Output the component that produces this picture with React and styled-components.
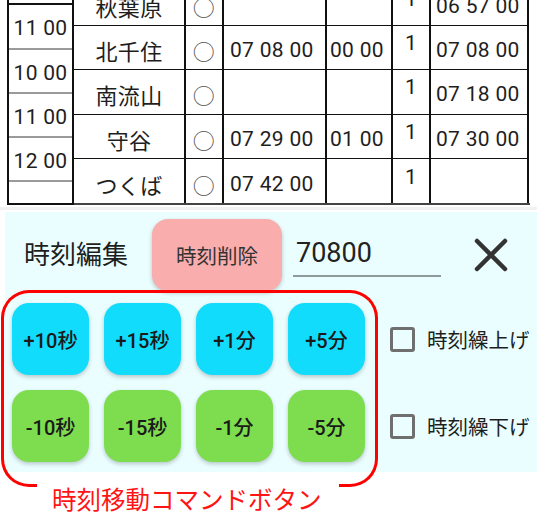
import React from 'react';
import styled, { createGlobalStyle } from 'styled-components';

const GlobalStyle = createGlobalStyle`
  html, body {
    margin: 0;
    padding: 0;
    background: #fff;
  }
  body {
    font-family: Roboto, "Noto Sans CJK JP", sans-serif;
    color: #1e1e1e;
  }
`;

const ROW_H = 44.3;

const Page = styled.div`
  position: relative;
  width: 537px;
  height: 525px;
  display: flex;
  flex-direction: column;
  overflow: hidden;
`;

const TableWrap = styled.div`
  display: flex;
  margin-top: -18.3px;
  margin-left: 7px;
  width: 523px;
`;

const TimeColumn = styled.div`
  width: 67px;
  display: flex;
  flex-direction: column;
  border-left: 2px solid #111;
  border-right: 2px solid #111;
  border-bottom: 2px solid #111;
  box-sizing: border-box;
`;

const TimeCell = styled.div`
  height: ${p => p.h}px;
  box-sizing: border-box;
  border-top: 2px solid ${p => (p.dark ? '#111' : '#9a9a9a')};
  display: flex;
  align-items: center;
  justify-content: center;
  padding-top: 4px;
  font-size: 21px;
  letter-spacing: 0.3px;
  &:first-child {
    border-top: none;
  }
`;

const MainTable = styled.div`
  flex: 1;
  display: grid;
  grid-template-columns: 112px 38px 103px 66px 38px 98px;
  grid-auto-rows: ${ROW_H}px;
  border-bottom: 2px solid #444;
`;

const Cell = styled.div`
  box-sizing: border-box;
  border-right: 2px solid #111;
  border-bottom: ${p => (p.last ? 'none' : '1px solid #111')};
  display: flex;
  align-items: center;
  justify-content: ${p => (p.center ? 'center' : 'flex-start')};
  padding: ${p => (p.raise ? '0 0 9px 0' : `5px 0 0 ${p.pad || 0}px`)};
  font-size: ${p => p.size || 21}px;
  letter-spacing: 0.3px;
  white-space: nowrap;
  color: ${p => p.color || '#1e1e1e'};
`;

const Divider = styled.div`
  height: 3px;
  margin-top: 2px;
  background: #f1f1f1;
`;

const Panel = styled.div`
  margin-top: 2px;
  margin-left: 5px;
  height: 260px;
  background: #eafeff;
  box-sizing: border-box;
  padding-top: 7px;
  display: flex;
  flex-direction: column;
`;

const Header = styled.div`
  height: 72px;
  display: flex;
  align-items: center;
`;

const Title = styled.div`
  margin-left: 19px;
  font-size: 26px;
  padding-bottom: 5px;
  color: #1e1e1e;
`;

const DeleteButton = styled.button`
  margin-left: 24px;
  width: 130px;
  height: 72px;
  border: none;
  border-radius: 16px;
  background: #f9adad;
  box-shadow: 0 2px 4px rgba(0, 0, 0, 0.22);
  font-family: Roboto, "Noto Sans CJK JP", sans-serif;
  font-size: 20.5px;
  color: #333;
  padding: 0;
`;

const TimeInput = styled.input`
  margin-left: 11px;
  width: 148px;
  height: 44px;
  box-sizing: border-box;
  border: none;
  border-bottom: 2px solid #8f9a9a;
  background: transparent;
  font-family: Roboto, "Noto Sans CJK JP", sans-serif;
  font-size: 27px;
  color: #222;
  padding: 0 0 2px 3px;
  outline: none;
`;

const CloseButton = styled.button`
  margin-left: 33px;
  width: 34px;
  height: 34px;
  border: none;
  background: transparent;
  padding: 0;
  display: flex;
`;

const Body = styled.div`
  display: flex;
  margin-top: 12px;
  margin-left: 7px;
`;

const ButtonGrid = styled.div`
  display: grid;
  grid-template-columns: repeat(4, 77px);
  grid-auto-rows: 72px;
  gap: 15px;
`;

const ShiftButton = styled.button`
  border: none;
  border-radius: 17px;
  background: ${p => (p.plus ? '#11dcfc' : '#7edc4f')};
  box-shadow: 0 2px 4px rgba(0, 0, 0, 0.22);
  font-family: Roboto, "Noto Sans CJK JP", sans-serif;
  font-size: 20px;
  font-weight: 500;
  color: #1a1a1a;
  padding: 0;
`;

const CheckColumn = styled.div`
  margin-left: 25px;
  display: grid;
  grid-auto-rows: 72px;
  gap: 15px;
`;

const CheckRow = styled.label`
  display: flex;
  align-items: center;
  gap: 12px;
  font-size: 20.5px;
  color: #1e1e1e;
`;

const CheckBox = styled.span`
  width: 25px;
  height: 25px;
  box-sizing: border-box;
  border: 3px solid #6f6f6f;
  border-radius: 3px;
`;

const Annotation = styled.div`
  position: absolute;
  left: 1px;
  top: 290px;
  width: 377px;
  display: flex;
  flex-direction: column;
  pointer-events: none;
`;

const FrameTop = styled.div`
  height: 164px;
  border: 3px solid #ff0000;
  border-bottom: none;
  border-radius: 28px 28px 0 0;
`;

const FrameBottom = styled.div`
  display: flex;
  justify-content: space-between;
`;

const Corner = styled.div`
  width: ${p => p.w}px;
  height: 27px;
  border-bottom: 3px solid #ff0000;
  ${p => (p.right
    ? 'border-right: 3px solid #ff0000; border-bottom-right-radius: 28px;'
    : 'border-left: 3px solid #ff0000; border-bottom-left-radius: 28px;')}
`;

const Caption = styled.div`
  margin-top: -2px;
  margin-left: 51px;
  font-size: 24.5px;
  line-height: 28px;
  color: #ff1414;
  font-family: "Noto Sans CJK JP", sans-serif;
`;

const rows = [
  ['秋葉原', '', '', '06 57 00'],
  ['北千住', '07 08 00', '00 00', '07 08 00'],
  ['南流山', '', '', '07 18 00'],
  ['守谷', '07 29 00', '01 00', '07 30 00'],
  ['つくば', '07 42 00', '', ''],
];

const leftTimes = [
  { t: '', h: 21.6 },
  { t: '11 00', h: ROW_H, dark: true },
  { t: '10 00', h: ROW_H },
  { t: '11 00', h: ROW_H },
  { t: '12 00', h: ROW_H },
  { t: '', h: 22 },
];

const plus = ['+10秒', '+15秒', '+1分', '+5分'];
const minus = ['-10秒', '-15秒', '-1分', '-5分'];

const App = () => (
  <Page>
    <GlobalStyle />
    <TableWrap>
      <TimeColumn>
        {leftTimes.map((c, i) => (
          <TimeCell key={i} h={c.h} dark={c.dark}>{c.t}</TimeCell>
        ))}
      </TimeColumn>
      <MainTable>
        {rows.map((r, i) => {
          const last = i === rows.length - 1;
          return (
            <React.Fragment key={i}>
              <Cell center last={last} size={22}>{r[0]}</Cell>
              <Cell center last={last} size={22} color="#555">○</Cell>
              <Cell last={last} pad={6}>{r[1]}</Cell>
              <Cell last={last} pad={3}>{r[2]}</Cell>
              <Cell center last={last} raise>1</Cell>
              <Cell last={last} pad={5}>{r[3]}</Cell>
            </React.Fragment>
          );
        })}
      </MainTable>
    </TableWrap>
    <Divider />
    <Panel>
      <Header>
        <Title>時刻編集</Title>
        <DeleteButton>時刻削除</DeleteButton>
        <TimeInput defaultValue="70800" />
        <CloseButton aria-label="close">
          <svg width="34" height="34" viewBox="0 0 34 34">
            <path d="M3 3 L31 31 M31 3 L3 31" stroke="#333" strokeWidth="4.5" strokeLinecap="round" />
          </svg>
        </CloseButton>
      </Header>
      <Body>
        <ButtonGrid>
          {plus.map(t => <ShiftButton key={t} plus>{t}</ShiftButton>)}
          {minus.map(t => <ShiftButton key={t}>{t}</ShiftButton>)}
        </ButtonGrid>
        <CheckColumn>
          <CheckRow><CheckBox />時刻繰上げ</CheckRow>
          <CheckRow><CheckBox />時刻繰下げ</CheckRow>
        </CheckColumn>
      </Body>
    </Panel>
    <Annotation>
      <FrameTop />
      <FrameBottom>
        <Corner w={33} />
        <Corner w={36} right />
      </FrameBottom>
      <Caption>時刻移動コマンドボタン</Caption>
    </Annotation>
  </Page>
);

export default App;
